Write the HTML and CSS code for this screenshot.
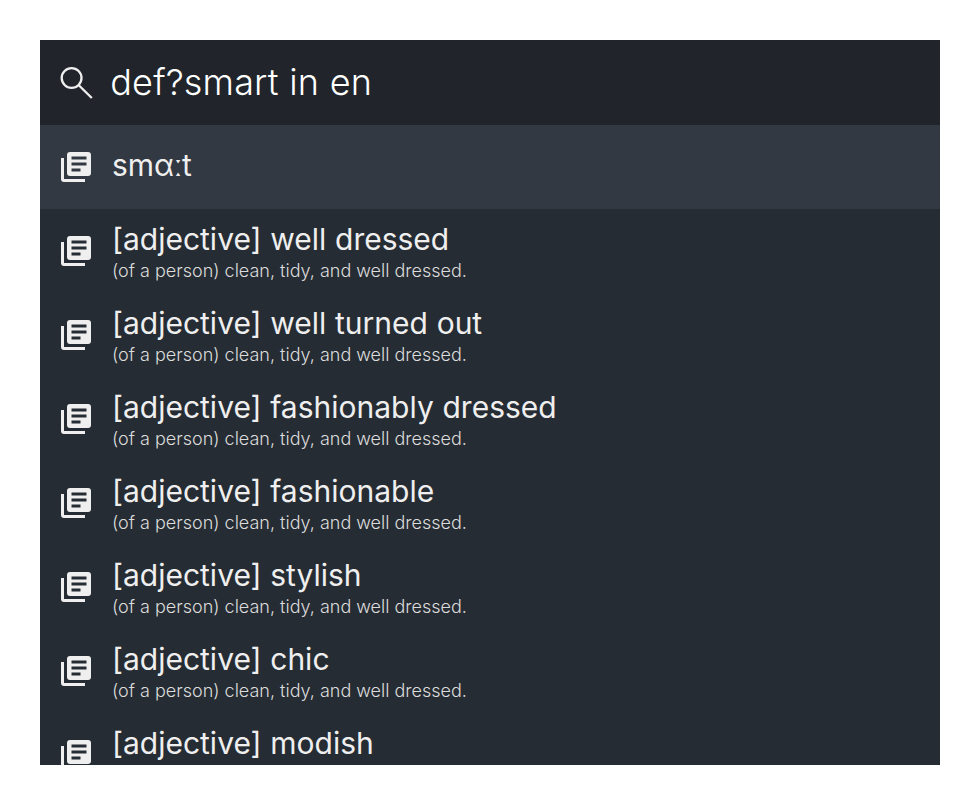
FILE: index.html
```html
<!DOCTYPE html>
<html lang="en">
<head>
<meta charset="utf-8">
<title>Dictionary</title>
<link rel="stylesheet" href="styles.css">
</head>
<body>
<svg class="sprite" aria-hidden="true">
<symbol id="book" viewBox="0 0 30 30"><path fill="currentColor" fill-rule="evenodd" d="M0 6H3V27H24V30H3a3 3 0 0 1-3-3ZM9 0H27a3 3 0 0 1 3 3V21a3 3 0 0 1-3 3H9a3 3 0 0 1-3-3V3a3 3 0 0 1 3-3ZM10.500 4.500V7.500H25.500V4.500ZM10.500 10.500V13.500H25.500V10.500ZM10.500 16.500V19.500H19.500V16.500Z"/></symbol>
</svg>
<main class="launcher">
<header class="search"><svg class="lens" viewBox="0 0 33 33"><circle cx="11.600" cy="12" r="9.900"/><path d="M18.800 19.200L31.800 32"/></svg><span class="query">def?smart in en</span></header>
<section class="results">
<article class="row selected"><svg class="icon"><use href="#book"/></svg><div class="text"><div class="title">smαːt</div></div></article>
<article class="row"><svg class="icon"><use href="#book"/></svg><div class="text"><div class="title">[adjective] well dressed</div><div class="sub">(of a person) clean, tidy, and well dressed.</div></div></article>
<article class="row"><svg class="icon"><use href="#book"/></svg><div class="text"><div class="title">[adjective] well turned out</div><div class="sub">(of a person) clean, tidy, and well dressed.</div></div></article>
<article class="row"><svg class="icon"><use href="#book"/></svg><div class="text"><div class="title">[adjective] fashionably dressed</div><div class="sub">(of a person) clean, tidy, and well dressed.</div></div></article>
<article class="row"><svg class="icon"><use href="#book"/></svg><div class="text"><div class="title">[adjective] fashionable</div><div class="sub">(of a person) clean, tidy, and well dressed.</div></div></article>
<article class="row"><svg class="icon"><use href="#book"/></svg><div class="text"><div class="title">[adjective] stylish</div><div class="sub">(of a person) clean, tidy, and well dressed.</div></div></article>
<article class="row"><svg class="icon"><use href="#book"/></svg><div class="text"><div class="title">[adjective] chic</div><div class="sub">(of a person) clean, tidy, and well dressed.</div></div></article>
<article class="row last"><svg class="icon"><use href="#book"/></svg><div class="text"><div class="title">[adjective] modish</div></div></article>
</section>
</main>
</body>
</html>
```

FILE: styles.css
```css
body { margin: 0; padding: 40px; background: #fff; font-family: Inter, sans-serif; color: #efefef; }
.sprite { display: none; }
.launcher { height: 725px; overflow: hidden; background: #262c33; }
.search { height: 85px; display: flex; align-items: center; padding-left: 20px; gap: 17.3px; background: #21252b; }
.lens { width: 33px; height: 33px; fill: none; stroke: currentColor; stroke-width: 2.3; }
.query { padding-bottom: 2px; font-size: 36px; font-weight: 300; line-height: 44px; letter-spacing: .15px; word-spacing: .4px; color: #fff; }
.row { height: 84px; display: flex; align-items: center; gap: 21px; padding-left: 21px; }
.selected { background: #323942; }
.selected .text { padding-bottom: 4px; }
.icon { width: 30px; height: 30px; flex: none; }
.text { white-space: nowrap; }
.title { font-size: 30px; font-weight: 400; line-height: 36px; word-spacing: .3px; }
.sub { padding-top: 1px; margin-bottom: -3px; font-size: 18px; font-weight: 300; line-height: 26px; color: #dcdcdc; }
.last { height: 56px; align-items: flex-start; }
.last .icon { margin-top: 27px; }
.last .text { margin-top: 12px; }
```
